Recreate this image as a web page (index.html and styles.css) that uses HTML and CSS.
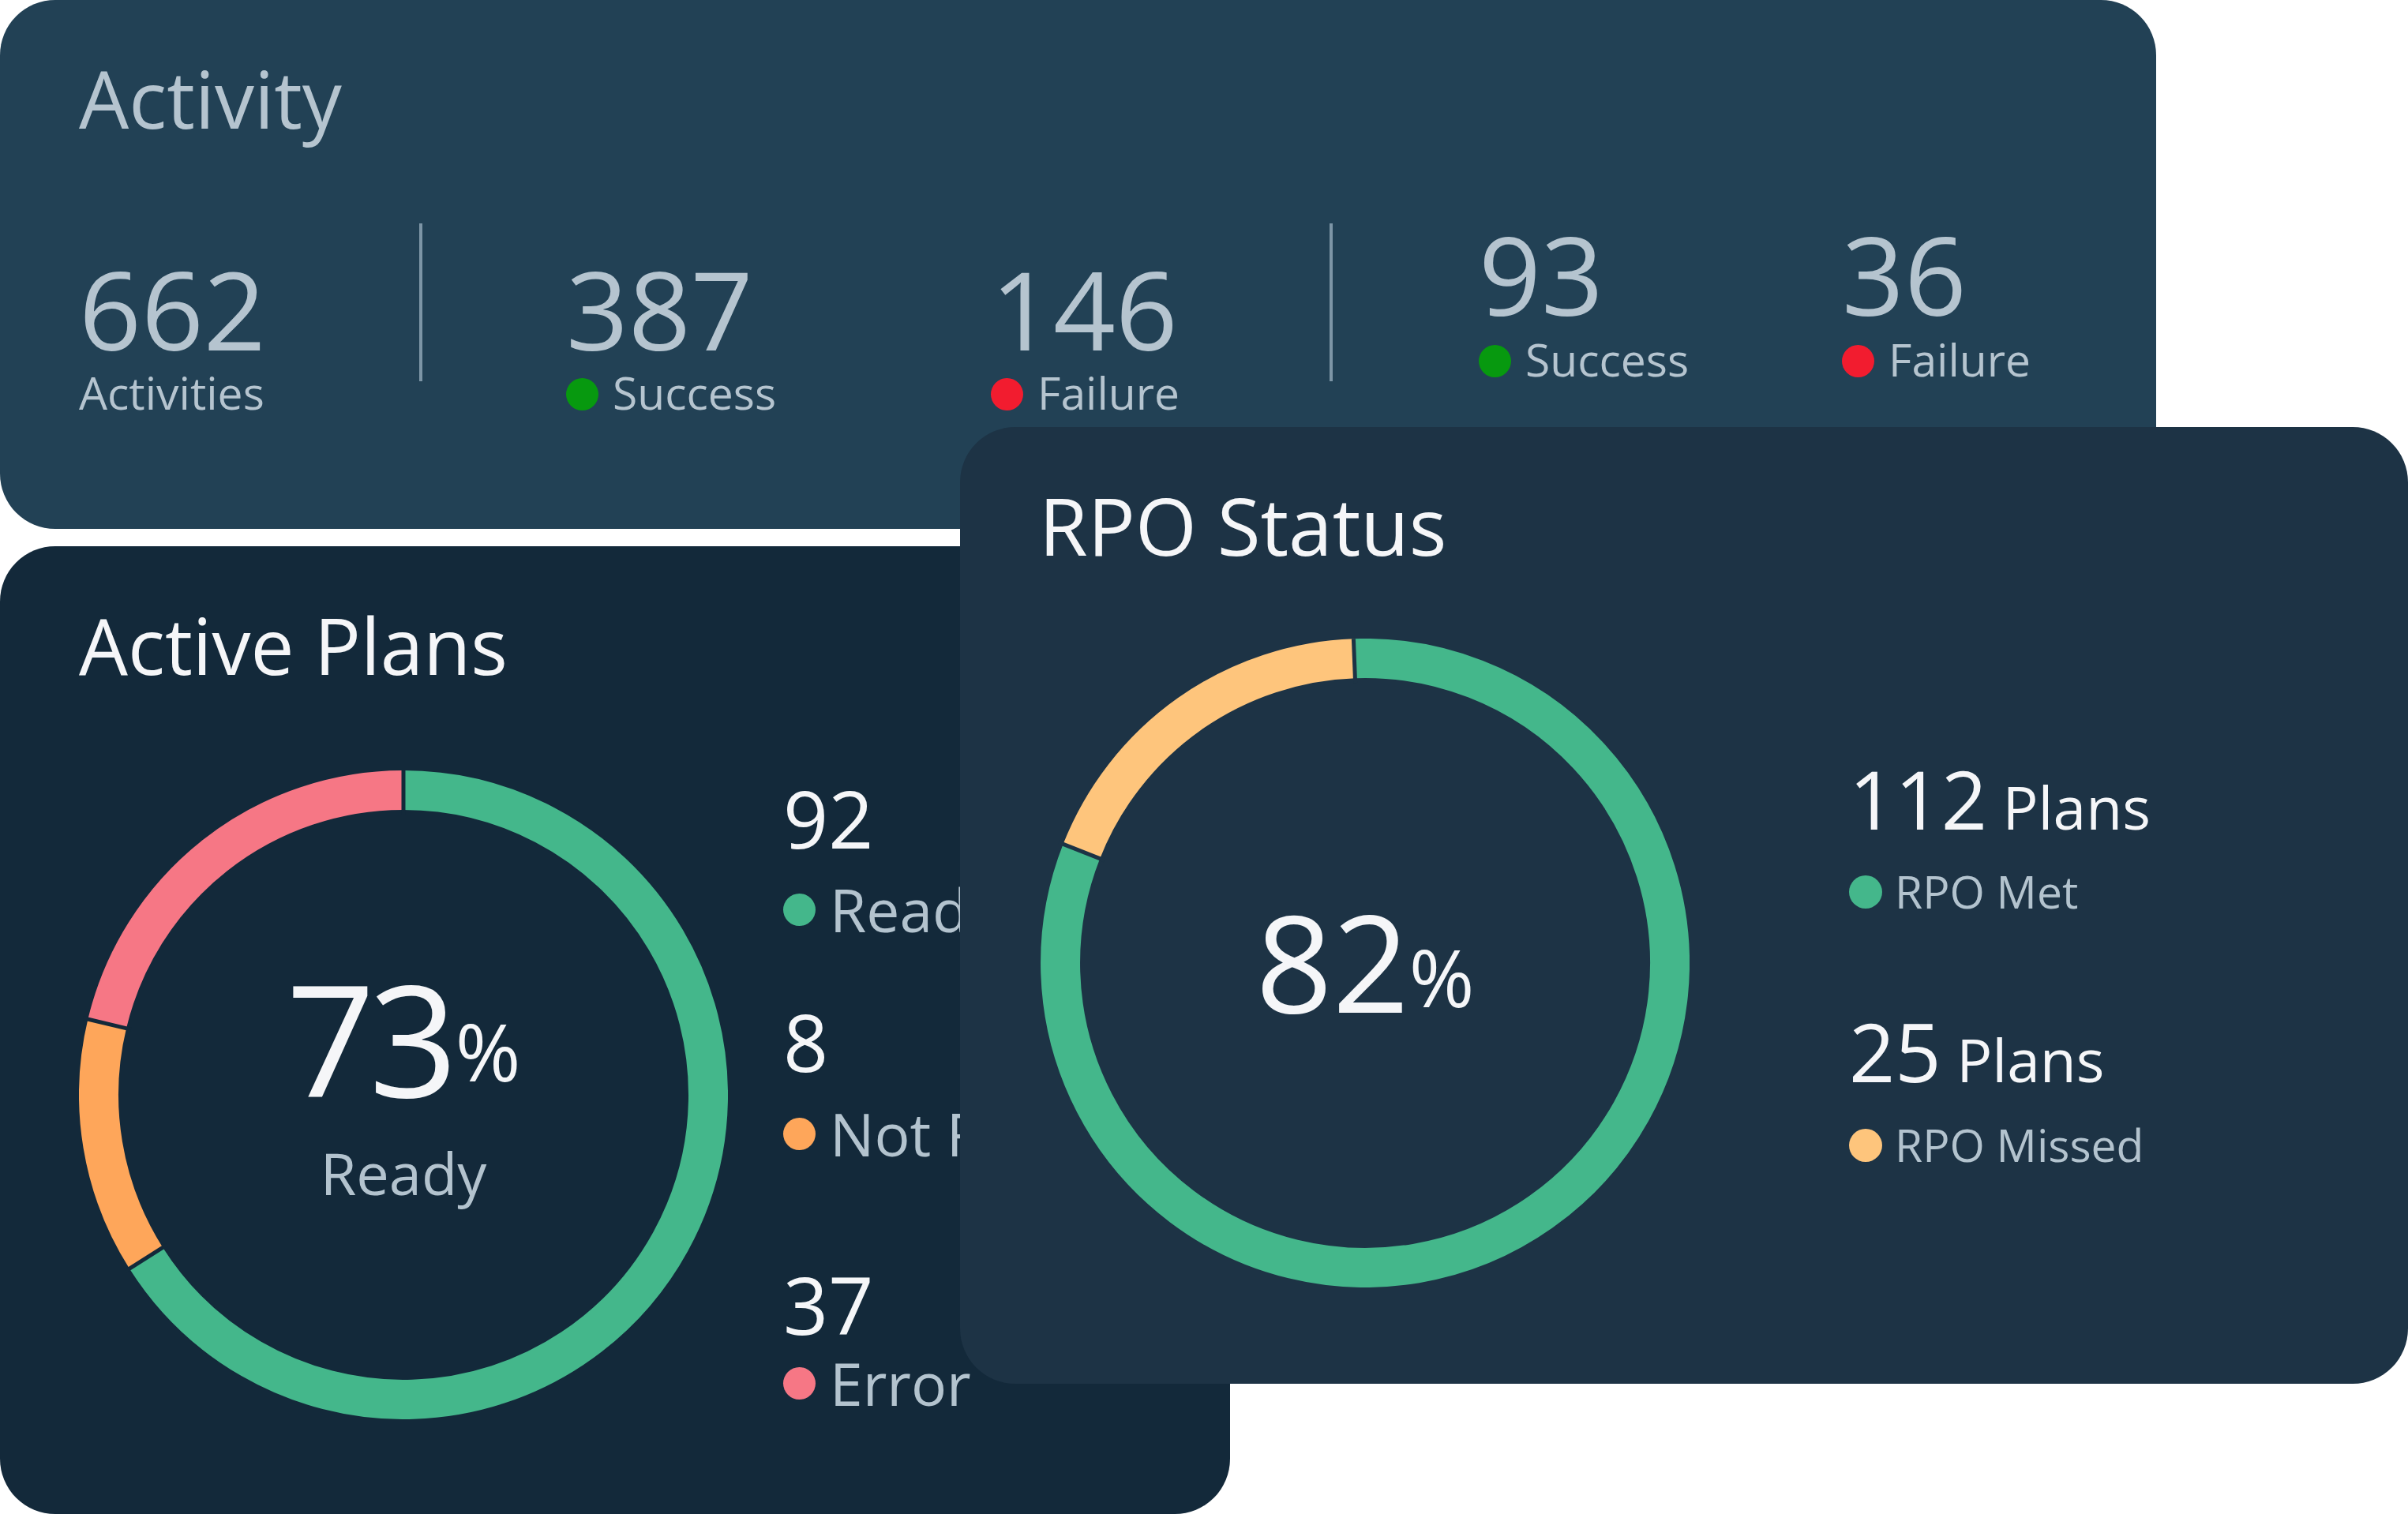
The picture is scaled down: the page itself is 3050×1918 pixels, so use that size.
FILE: index.html
```html
<!DOCTYPE html>
<html lang="en">
<head>
<meta charset="utf-8">
<title>Dashboard</title>
<link rel="stylesheet" href="styles.css">
</head>
<body>
<div class="board">
  <section class="card activity">
    <h2 class="title">Activity</h2>
    <div class="stats">
      <div class="stat total">
        <div class="num">662</div>
        <div class="label">Activities</div>
      </div>
      <div class="divider"></div>
      <div class="group mid">
        <div class="stat">
          <div class="num">387</div>
          <div class="label"><span class="dot ok"></span>Success</div>
        </div>
        <div class="stat">
          <div class="num">146</div>
          <div class="label"><span class="dot fail"></span>Failure</div>
        </div>
      </div>
      <div class="divider"></div>
      <div class="group right">
        <div class="stat">
          <div class="num">93</div>
          <div class="label"><span class="dot ok"></span>Success</div>
        </div>
        <div class="stat">
          <div class="num">36</div>
          <div class="label"><span class="dot fail"></span>Failure</div>
        </div>
      </div>
    </div>
  </section>

  <section class="card plans">
    <h2 class="title">Active Plans</h2>
    <div class="plans-body">
      <div class="donut">
        <svg class="ring" width="822" height="822" viewBox="0 0 822 822">
          <path class="seg green" d="M411 25 A386 386 0 1 1 85.1 617.8"/>
          <path class="seg orange" d="M85.1 617.8 A386 386 0 0 1 35.7 320.9"/>
          <path class="seg red" d="M35.7 320.9 A386 386 0 0 1 411 25"/>
          <line class="sep sep-plans" x1="411" y1="-6" x2="411" y2="56"/>
          <line class="sep sep-plans" x1="58.9" y1="634.4" x2="111.3" y2="601.2"/>
          <line class="sep sep-plans" x1="5.5" y1="313.7" x2="65.8" y2="328.1"/>
        </svg>
        <div class="center plans-center">
          <div class="big plans-big"><span class="digits">73</span><span class="pct pct-plans">%</span></div>
          <div class="sub">Ready</div>
        </div>
      </div>
      <div class="plans-legend">
        <div class="pl-item">
          <div class="pl-num">92</div>
          <div class="pl-label l1"><span class="ldot green-dot"></span>Ready</div>
        </div>
        <div class="pl-item i2">
          <div class="pl-num">8</div>
          <div class="pl-label l2"><span class="ldot orange-dot"></span>Not Ready</div>
        </div>
        <div class="pl-item i3">
          <div class="pl-num">37</div>
          <div class="pl-label l3"><span class="ldot red-dot"></span>Error</div>
        </div>
      </div>
    </div>
  </section>

  <section class="card rpo">
    <h2 class="title">RPO Status</h2>
    <div class="rpo-body">
      <div class="donut">
        <svg class="ring" width="822" height="822" viewBox="0 0 822 822">
          <path class="seg green" d="M397.5 25.2 A386 386 0 1 1 51.9 269.5"/>
          <path class="seg amber" d="M51.9 269.5 A386 386 0 0 1 397.5 25.2"/>
          <line class="sep sep-rpo" x1="396.4" y1="0.25" x2="398.6" y2="56.2"/>
          <line class="sep sep-rpo" x1="23" y1="258.2" x2="80.7" y2="280.9"/>
        </svg>
        <div class="center rpo-center">
          <div class="big rpo-big">82<span class="pct pct-rpo">%</span></div>
        </div>
      </div>
      <div class="rpo-legend">
        <div class="rl-item">
          <div class="rl-num">112<span class="unit"> Plans</span></div>
          <div class="rl-label"><span class="ldot green-dot rdot"></span>RPO Met</div>
        </div>
        <div class="rl-item r2">
          <div class="rl-num">25<span class="unit"> Plans</span></div>
          <div class="rl-label"><span class="ldot amber-dot rdot"></span>RPO Missed</div>
        </div>
      </div>
    </div>
  </section>
</div>
</body>
</html>
```

FILE: styles.css
```css
html, body {
  margin: 0;
  padding: 0;
  background: #ffffff;
}

body {
  width: 3050px;
  height: 1918px;
  overflow: hidden;
  font-family: "Open Sans", "Noto Sans", sans-serif;
}

.board {
  display: grid;
  grid-template-columns: 1216px 342px 1173px 319px;
  grid-template-rows: 541px 129px 22px 1061px 165px;
  width: 3050px;
  height: 1918px;
}

.card {
  border-radius: 70px;
  box-sizing: border-box;
  overflow: hidden;
}

.title {
  margin: 0;
  font-weight: 400;
  font-size: 100px;
  line-height: 1;
  white-space: nowrap;
}

/* ---------- Activity ---------- */
.activity {
  grid-column: 1 / 4;
  grid-row: 1 / 3;
  background: #224155;
  color: #b5c4cf;
  padding: 74px 0 0 100px;
  z-index: 1;
}

.stats {
  display: flex;
  align-items: flex-start;
  margin-top: 103px;
}

.stats > * {
  flex: none;
}

.stat {
  display: flex;
  flex-direction: column;
  gap: 10px;
  flex: none;
}

.num {
  font-size: 138px;
  line-height: 1;
  white-space: nowrap;
}

.label {
  display: flex;
  align-items: center;
  font-size: 57px;
  line-height: 1;
  white-space: nowrap;
}

.total {
  width: 431px;
  margin-top: 44px;
}

.divider {
  width: 4px;
  height: 200px;
  margin-top: 6px;
  background: #7d95a6;
}

.group {
  display: flex;
}

.mid {
  margin-left: 182px;
  margin-top: 44px;
}

.mid .stat {
  width: 538px;
}

.mid .stat:last-child {
  width: 429px;
}

.right {
  margin-left: 185px;
}

.right .stat {
  width: 460px;
  gap: 12px;
}

.dot {
  width: 41px;
  height: 41px;
  border-radius: 50%;
  margin-right: 18px;
  margin-top: 4px;
  flex: none;
}

.dot.ok { background: #07990f; }
.dot.fail { background: #f21c2f; }

/* ---------- Donuts ---------- */
.donut {
  display: grid;
  width: 822px;
  height: 822px;
  flex: none;
}

.ring,
.center {
  grid-area: 1 / 1;
}

.ring {
  display: block;
}

.seg {
  fill: none;
  stroke-width: 50;
}

.seg.green { stroke: #44b78b; }
.seg.orange { stroke: #fea65a; }
.seg.red { stroke: #f67785; }
.seg.amber { stroke: #fec57c; }

.sep {
  stroke-width: 5;
}

.sep-plans { stroke: #13293a; }
.sep-rpo { stroke: #1d3345; }

.center {
  display: flex;
  flex-direction: column;
  align-items: center;
  color: #f5f6f8;
}

.big {
  font-size: 203px;
  line-height: 1;
  white-space: nowrap;
}

.plans-big {
  font-size: 197px;
}

.digits {
  letter-spacing: -8px;
}

.pct {
  font-size: 100px;
}

.pct-plans {
  vertical-align: 20px;
  margin-left: 5px;
}

.pct-rpo { vertical-align: 7px; }

.sub {
  margin-top: 37px;
  font-size: 74px;
  line-height: 1;
  color: #b3c3ce;
}

/* ---------- Active Plans ---------- */
.plans {
  grid-column: 1 / 3;
  grid-row: 4 / 6;
  background: #13293a;
  padding: 76px 0 0 100px;
  z-index: 1;
}

.plans .title {
  font-size: 98px;
  color: #f5f6f8;
}

.plans-body {
  display: flex;
  align-items: flex-start;
  margin-top: 110px;
}

.plans-center {
  align-self: start;
  justify-self: center;
  margin-top: 239px;
}

.plans-legend {
  margin-left: 70px;
  margin-top: 10px;
}

.pl-num {
  font-size: 100px;
  line-height: 1;
  color: #f5f6f8;
}

.pl-label {
  display: flex;
  align-items: center;
  font-size: 75px;
  line-height: 1;
  color: #b3c3ce;
  white-space: nowrap;
}

.l1 { margin-top: 29px; }
.l2 { margin-top: 30px; }
.l3 { margin-top: 13px; }

.i2 { margin-top: 79px; }
.i3 { margin-top: 128px; }

.ldot {
  width: 41px;
  height: 41px;
  border-radius: 50%;
  margin-right: 18px;
  flex: none;
}

.green-dot { background: #44b78b; }
.orange-dot { background: #fea65a; }
.red-dot { background: #f67785; }
.amber-dot { background: #fec57c; }

/* ---------- RPO ---------- */
.rpo {
  grid-column: 2 / 5;
  grid-row: 2 / 5;
  background: #1d3345;
  padding: 74px 0 0 100px;
  z-index: 2;
}

.rpo .title {
  color: #f5f6f8;
}

.rpo-body {
  display: flex;
  align-items: center;
  margin-top: 94px;
  margin-left: 2px;
}

.rpo-center {
  align-self: center;
  justify-self: center;
  margin-bottom: 6px;
}

.rpo-big {
  font-size: 170px;
}

.rpo-legend {
  margin-left: 202px;
}

.rl-num {
  font-size: 102px;
  line-height: 1;
  color: #f5f6f8;
  white-space: nowrap;
}

.unit {
  font-size: 75px;
}

.rl-label {
  display: flex;
  align-items: center;
  margin-top: 38px;
  font-size: 57px;
  line-height: 1;
  color: #b3c3ce;
  white-space: nowrap;
}

.r2 {
  margin-top: 123px;
}

.r2 .rl-label {
  margin-top: 39px;
}

.rdot {
  width: 42px;
  height: 42px;
  margin-right: 16px;
}
```
